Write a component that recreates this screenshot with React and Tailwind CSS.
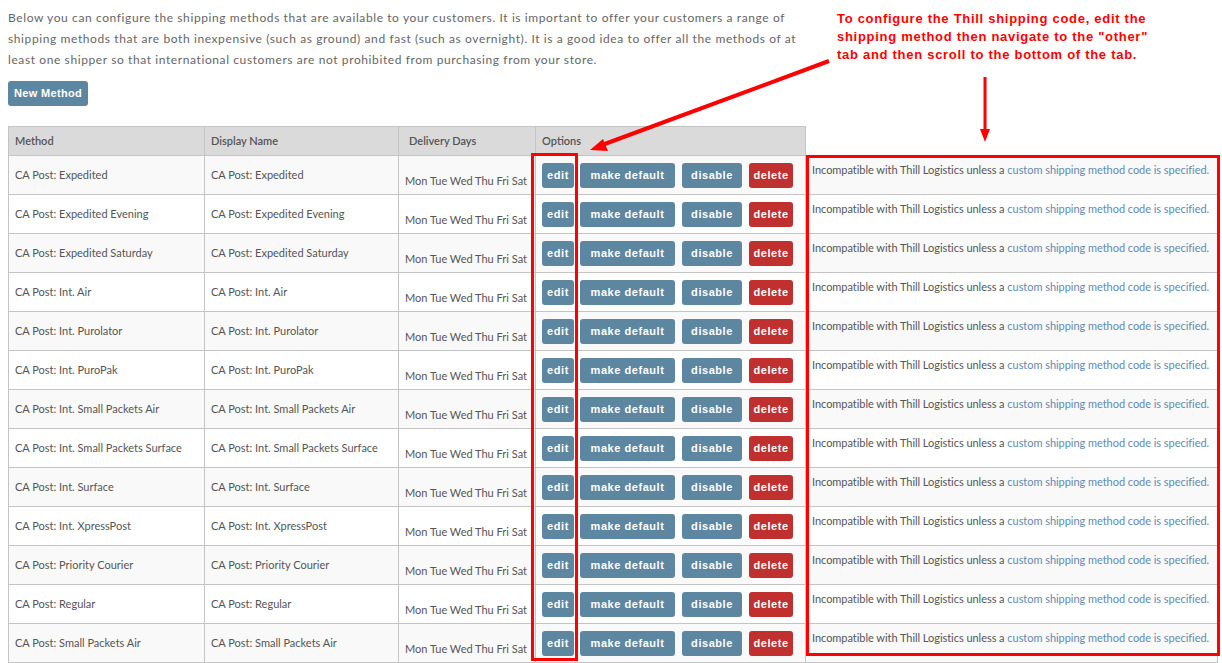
import React from "react";

const rows = [
  "CA Post: Expedited",
  "CA Post: Expedited Evening",
  "CA Post: Expedited Saturday",
  "CA Post: Int. Air",
  "CA Post: Int. Purolator",
  "CA Post: Int. PuroPak",
  "CA Post: Int. Small Packets Air",
  "CA Post: Int. Small Packets Surface",
  "CA Post: Int. Surface",
  "CA Post: Int. XpressPost",
  "CA Post: Priority Courier",
  "CA Post: Regular",
  "CA Post: Small Packets Air",
];

const arial = { fontFamily: "'Liberation Sans', Arial, sans-serif" };

function Btn({ children, red, w }) {
  return (
    <span
      className={`inline-flex h-[25px] items-center justify-center rounded-[3px] text-[11px] font-bold tracking-[0.05em] text-white ${w} ${
        red ? "bg-[#c0302e]" : "bg-[#5d86a1]"
      }`}
      style={arial}
    >
      {children}
    </span>
  );
}

export default function App() {
  return (
    <div
      className="relative h-[663px] w-[1222px] overflow-hidden bg-white text-[#555]"
      style={{ fontFamily: "Lato, 'Open Sans', sans-serif" }}
    >
      <div className="pl-[8px] pt-[7px]">
        <p className="w-[800px] text-[12px] leading-[21px] tracking-[0.05em] text-[#666]">
          Below you can configure the shipping methods that are available to your customers. It is important to offer your customers a range of shipping methods that are both inexpensive (such as ground) and fast (such as overnight). It is a good idea to offer all the methods of at least one shipper so that international customers are not prohibited from purchasing from your store.
        </p>
        <button
          className="mt-[11px] block h-[25px] w-[80px] rounded-[3px] bg-[#5d86a1] text-[11px] font-bold tracking-[0.03em] text-white"
          style={arial}
        >
          New Method
        </button>
        <table className="mt-[20px] border-collapse text-[11px]">
          <thead>
            <tr className="h-[29px]">
              <th className="w-[196px] border border-[#c4c4c4] bg-[#dadada] px-[6px] text-left font-semibold">Method</th>
              <th className="w-[194px] border border-[#c4c4c4] bg-[#dadada] px-[6px] text-left font-semibold">Display Name</th>
              <th className="w-[137px] border border-[#c4c4c4] bg-[#dadada] px-[10px] text-left font-semibold">Delivery Days</th>
              <th className="w-[270px] border border-[#c4c4c4] bg-[#dadada] px-[6px] text-left font-semibold">Options</th>
              <th className="w-[412px]"></th>
            </tr>
          </thead>
          <tbody>
            {rows.map((r, i) => (
              <tr key={r} className={`h-[39px] ${i % 2 === 0 ? "bg-[#f9f9f9]" : "bg-white"}`}>
                <td className="border border-[#c4c4c4] px-[6px] align-middle">{r}</td>
                <td className="border border-[#c4c4c4] px-[6px] align-middle">{r}</td>
                <td className="whitespace-nowrap border border-[#c4c4c4] px-[6px] pt-[12px] align-middle">Mon Tue Wed Thu Fri Sat</td>
                <td className="border border-[#c4c4c4] px-[6px] align-middle">
                  <div className="flex">
                    <Btn w="w-[32px]">edit</Btn>
                    <span className="w-[6px]" />
                    <Btn w="w-[95px]">make default</Btn>
                    <span className="w-[7px]" />
                    <Btn w="w-[60px]">disable</Btn>
                    <span className="w-[7px]" />
                    <Btn w="w-[44px]" red>delete</Btn>
                  </div>
                </td>
                <td className="whitespace-nowrap border border-[#c4c4c4] px-[6px] pb-[9px] align-middle tracking-[-0.004em]">
                  Incompatible with Thill Logistics unless a{" "}
                  <span className="text-[#6389b0]">custom shipping method code is specified.</span>
                </td>
              </tr>
            ))}
          </tbody>
        </table>
      </div>

      {/* Annotations */}
      <div className="pointer-events-none absolute left-[531px] top-[153px] h-[508px] w-[47px] border-[3px] border-[#ff0000]" />
      <div className="pointer-events-none absolute left-[806px] top-[155px] h-[501px] w-[414px] border-[3px] border-[#ff0000]" />
      <div
        className="absolute left-[837px] top-[10px] text-[13px] font-bold leading-[18px] tracking-[0.055em] text-[#ff0000]"
        style={arial}
      >
        To configure the Thill shipping code, edit the
        <br />
        shipping method then navigate to the "other"
        <br />
        tab and then scroll to the bottom of the tab.
      </div>
      <svg className="pointer-events-none absolute left-0 top-0" width="1222" height="663">
        <line x1="829" y1="61" x2="602" y2="145" stroke="#ff0000" strokeWidth="4" />
        <polygon points="590,150 603,139 608,151" fill="#ff0000" />
        <line x1="985" y1="77" x2="985" y2="130" stroke="#ff0000" strokeWidth="3" />
        <polygon points="980,129 990,129 985,142" fill="#ff0000" />
      </svg>
    </div>
  );
}
